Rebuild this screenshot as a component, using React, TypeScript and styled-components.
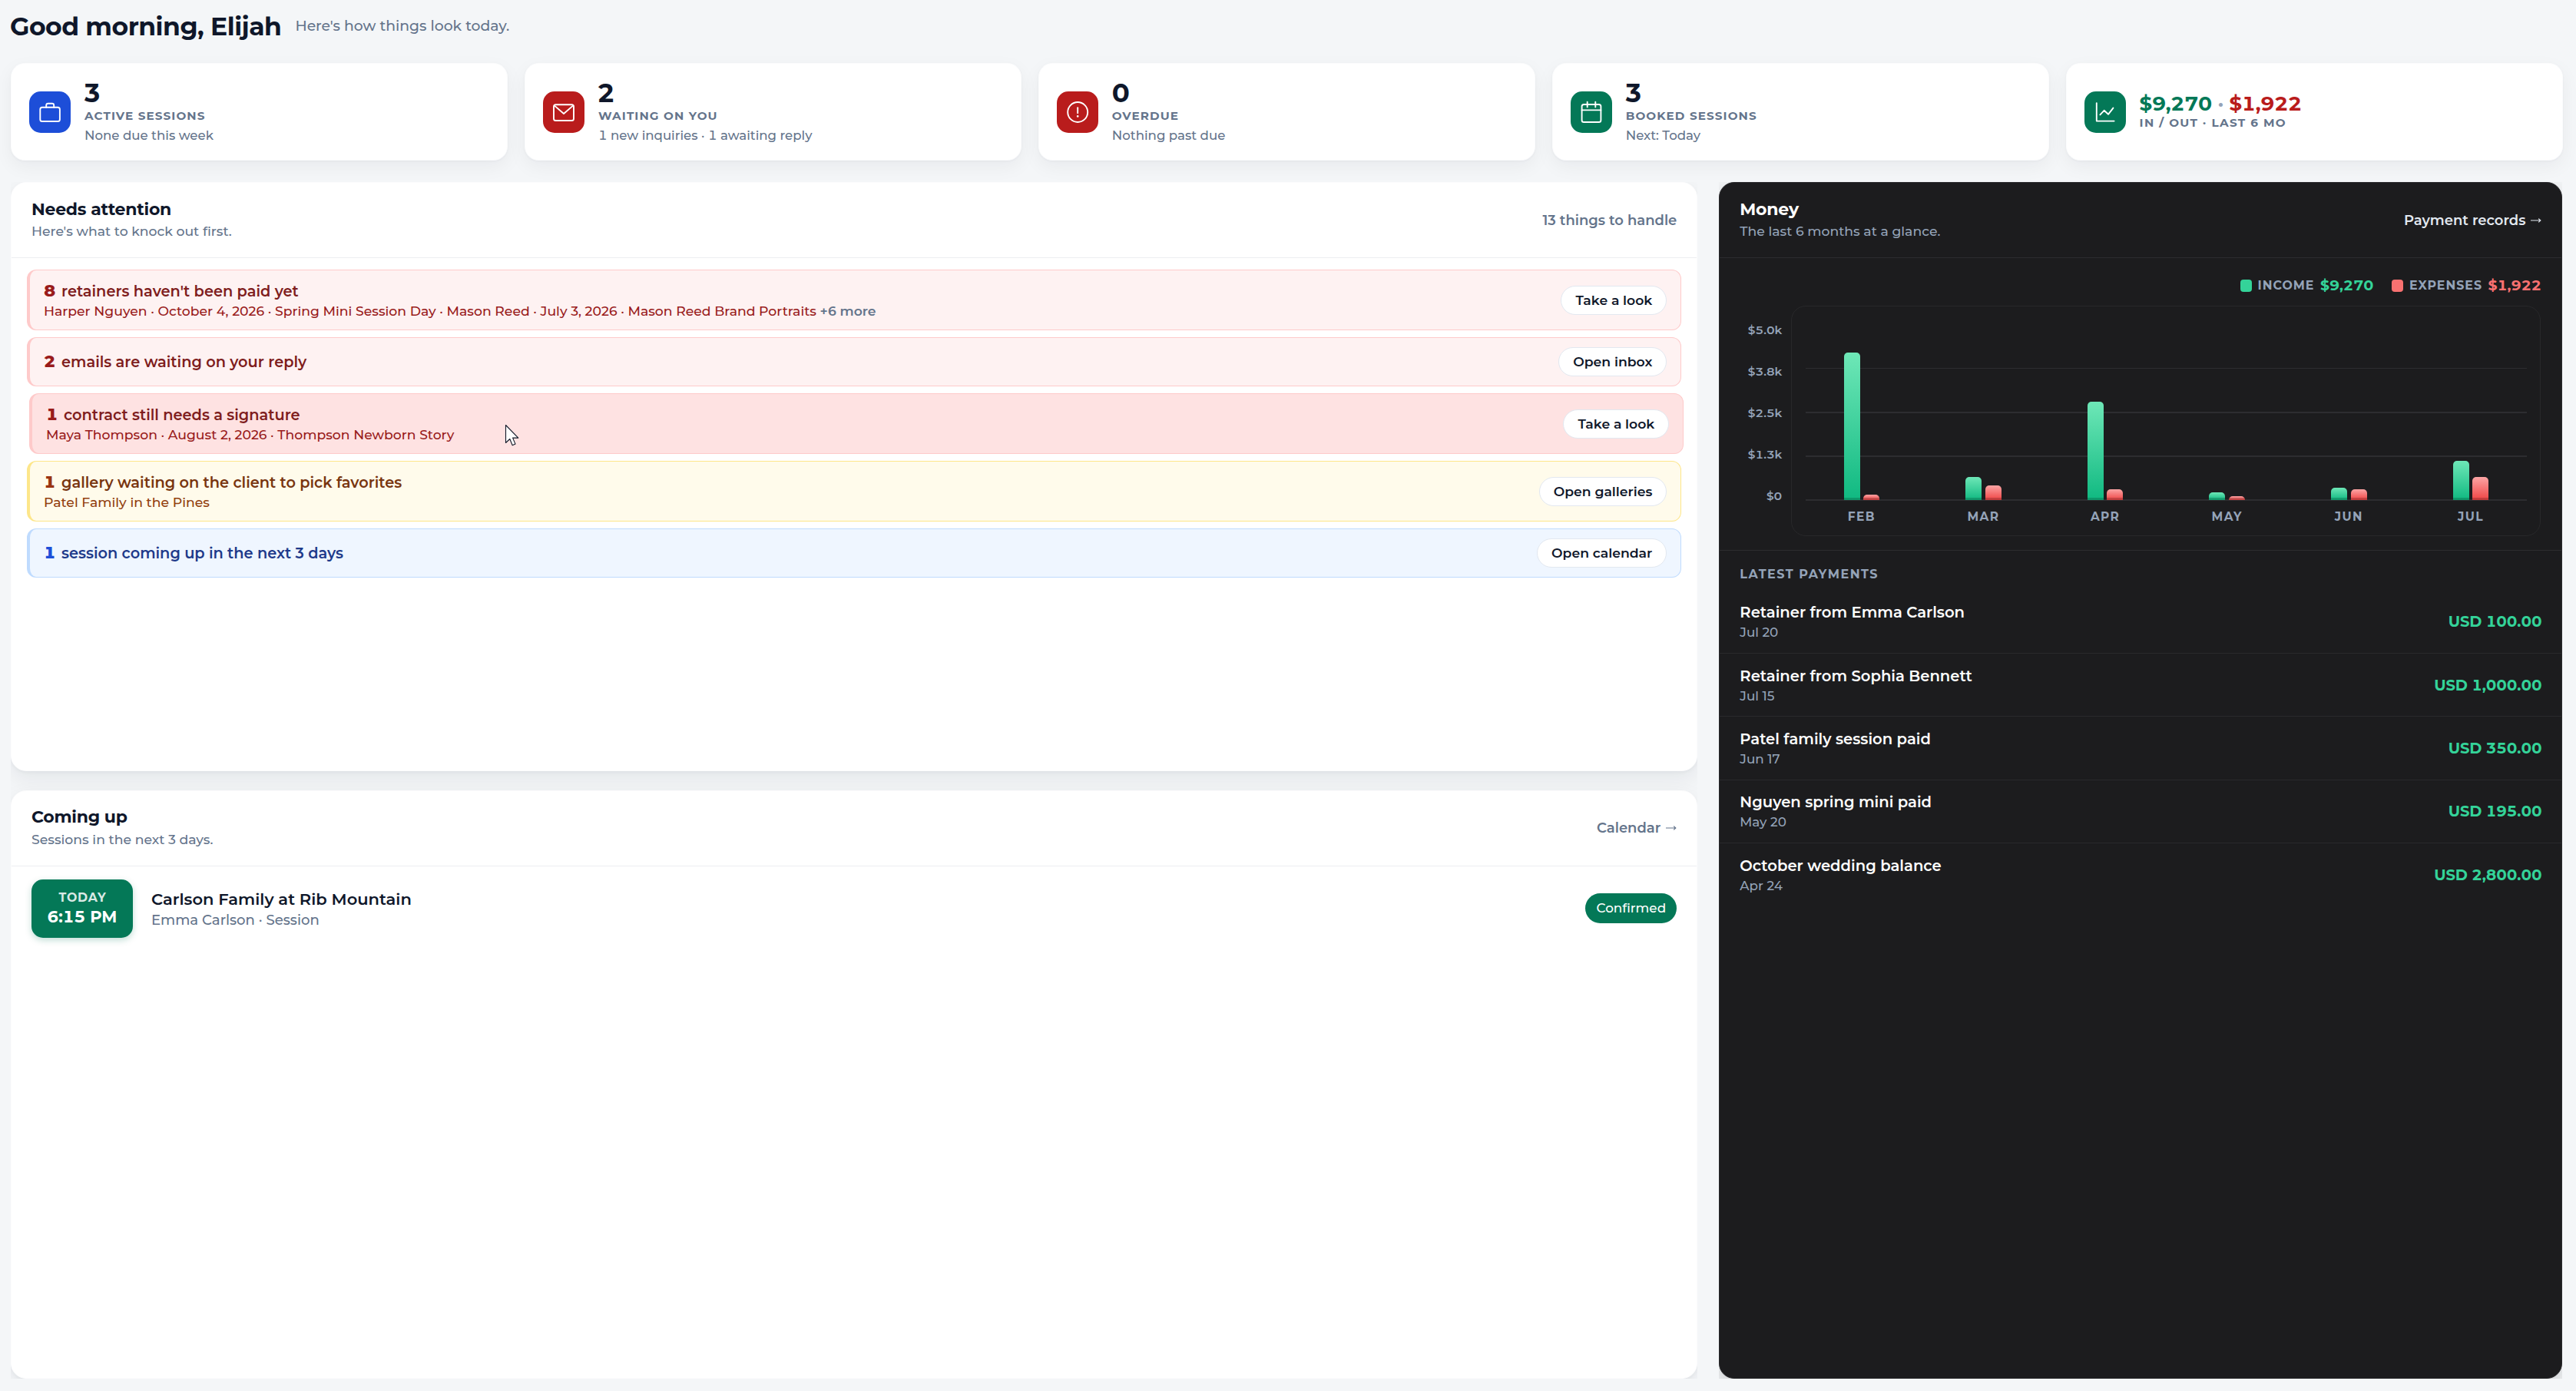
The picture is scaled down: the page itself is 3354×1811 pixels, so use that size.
import React from "react";
import styled, { createGlobalStyle } from "styled-components";

const GlobalStyle = createGlobalStyle`
  *, *::before, *::after { box-sizing: border-box; }
  body {
    margin: 0;
    background: #f4f6f8;
    color: #0f172a;
    font-family: Montserrat, Inter, "Liberation Sans", sans-serif;
  }
  h1, h2, p { margin: 0; }
`;

/* ---------- page ---------- */

const Page = styled.main`
  display: flex;
  flex-direction: column;
  height: 1811px;
  padding: 14px 17.5px 16px 14px;
`;

const Greeting = styled.header`
  display: flex;
  align-items: center;
  gap: 18px;
  height: 40px;
  margin: 0 0 28px -1px;
`;

const GreetingTitle = styled.h1`
  font-size: 33px;
  font-weight: 700;
  line-height: 40px;
  letter-spacing: -0.5px;
`;

const GreetingNote = styled.p`
  font-size: 18.8px;
  font-weight: 500;
  line-height: 24px;
  color: #64748b;
`;

/* ---------- stats ---------- */

const Stats = styled.section`
  display: grid;
  grid-template-columns: repeat(5, 1fr);
  gap: 22px;
  margin-bottom: 28px;
`;

const StatCard = styled.article`
  display: flex;
  align-items: center;
  gap: 18px;
  height: 127px;
  padding: 0 23px;
  background: #fff;
  border: 1px solid #fbfcfd;
  border-radius: 18px;
  box-shadow: 0 8px 24px rgba(15, 23, 42, 0.05), 0 1px 3px rgba(15, 23, 42, 0.04);
`;

const StatIcon = styled.div<{ $color: string }>`
  flex: none;
  width: 54px;
  height: 54px;
  border-radius: 15px;
  background: ${(p) => p.$color};

  svg {
    display: block;
    fill: none;
    stroke: #fff;
    stroke-width: 1.9;
    stroke-linecap: round;
    stroke-linejoin: round;
  }
`;

const StatNumber = styled.div`
  font-size: 34px;
  font-weight: 700;
  line-height: 33px;
  margin-bottom: 3px;
`;

const StatMoney = styled.div`
  display: flex;
  gap: 7.5px;
  font-size: 26px;
  font-weight: 700;
  line-height: 29px;
  letter-spacing: -0.3px;
  font-variant-numeric: tabular-nums;
`;

const Tint = styled.span<{ $color: string }>`
  color: ${(p) => p.$color};
`;

const StatLabel = styled.div<{ $wide?: boolean }>`
  font-size: 15.2px;
  font-weight: 700;
  line-height: 20px;
  letter-spacing: ${(p) => (p.$wide ? 1.35 : 1.1)}px;
  color: #64748b;
`;

const StatNote = styled.div`
  margin-top: 4px;
  font-size: 16.6px;
  font-weight: 500;
  line-height: 22px;
  font-variant-numeric: tabular-nums;
  color: #64748b;
`;

/* ---------- panels ---------- */

const Columns = styled.div`
  flex: 1;
  min-height: 0;
  display: grid;
  grid-template-columns: 2fr 1fr;
  gap: 28px;
`;

const Column = styled.div`
  display: grid;
  grid-auto-rows: 1fr;
  gap: 25px;
  min-width: 0;
  overflow: hidden;
`;

const Panel = styled.section<{ $dark?: boolean }>`
  display: flex;
  flex-direction: column;
  min-height: 0;
  border-radius: 20px;
  border: 1px solid ${(p) => (p.$dark ? "#29292c" : "#fcfcfd")};
  background: ${(p) => (p.$dark ? "#1c1c1e" : "#fff")};
  box-shadow: ${(p) =>
    p.$dark
      ? "0 10px 30px rgba(0, 0, 0, 0.18)"
      : "0 10px 28px rgba(15, 23, 42, 0.07), 0 2px 4px rgba(15, 23, 42, 0.04)"};
`;

const PanelHeader = styled.header<{ $dark?: boolean }>`
  display: flex;
  align-items: center;
  justify-content: space-between;
  height: 98px;
  padding: 0 26px 2px;
  border-bottom: 1px solid ${(p) => (p.$dark ? "#2c2c2f" : "#eceef1")};
`;

const PanelTitle = styled.h2<{ $dark?: boolean }>`
  font-size: 22px;
  font-weight: 700;
  line-height: 28px;
  letter-spacing: -0.24px;
  margin-bottom: 3.5px;
  color: ${(p) => (p.$dark ? "#fff" : "#0f172a")};
`;

const PanelNote = styled.p<{ $dark?: boolean }>`
  font-size: 17.25px;
  font-weight: 500;
  line-height: 22px;
  color: ${(p) => (p.$dark ? "#94a3b8" : "#64748b")};
`;

const PanelLink = styled.span<{ $dark?: boolean }>`
  display: flex;
  align-items: center;
  gap: 7px;
  padding-top: 2px;
  font-size: 18px;
  font-weight: 600;
  line-height: 24px;
  color: ${(p) => (p.$dark ? "#e2e8f0" : "#64748b")};
`;

/* ---------- needs attention ---------- */

const TaskList = styled.div`
  display: flex;
  flex-direction: column;
  gap: 9px;
  padding: 15px 20px;
`;

type Tone = "red" | "amber" | "blue";

const tones = {
  red: { bg: "#fef2f2", hover: "#fee2e2", border: "#fecaca", count: "#991b1b", title: "#7f1d1d", note: "#991b1b" },
  amber: { bg: "#fffbeb", hover: "#fef3c7", border: "#fde68a", count: "#9a3412", title: "#78350f", note: "#92400e" },
  blue: { bg: "#eff6ff", hover: "#dbeafe", border: "#bfdbfe", count: "#1d4ed8", title: "#1e3a8a", note: "#1e40af" },
};

const TaskRow = styled.div<{ $tone: Tone; $tall: boolean; $hovered?: boolean }>`
  display: flex;
  align-items: center;
  justify-content: space-between;
  height: ${(p) => (p.$tall ? 79 : 64)}px;
  padding: 0 18px;
  border: 1px solid ${(p) => tones[p.$tone].border};
  border-left-width: 4px;
  border-radius: 12px;
  background: ${(p) => (p.$hovered ? tones[p.$tone].hover : tones[p.$tone].bg)};
  transform: ${(p) => (p.$hovered ? "translateX(3px)" : "none")};
`;

const TaskTitle = styled.div<{ $tone: Tone }>`
  display: flex;
  gap: 8px;
  font-size: 19.35px;
  font-weight: 600;
  line-height: 26px;
  color: ${(p) => tones[p.$tone].title};
`;

const TaskCount = styled.span<{ $tone: Tone }>`
  width: 15px;
  text-align: center;
  font-size: 22px;
  font-weight: 800;
  font-variant-numeric: tabular-nums;
  color: ${(p) => tones[p.$tone].count};
`;

const TaskNote = styled.div<{ $tone: Tone }>`
  margin-top: 2px;
  font-size: 17.26px;
  font-weight: 500;
  line-height: 22px;
  color: ${(p) => tones[p.$tone].note};
`;

const TaskMore = styled.span`
  font-weight: 600;
  color: #64748b;
`;

const TaskButton = styled.button`
  height: 38px;
  padding: 0 18px;
  border: 1px solid #e2e8f0;
  border-radius: 19px;
  background: #fff;
  color: #0f172a;
  font: 600 17.25px/24px Montserrat, Inter, "Liberation Sans", sans-serif;
`;

/* ---------- coming up ---------- */

const SessionRow = styled.div`
  display: flex;
  align-items: center;
  padding: 17px 26px;
`;

const TimeBadge = styled.div`
  display: flex;
  flex-direction: column;
  align-items: center;
  justify-content: center;
  gap: 2px;
  width: 132px;
  height: 76px;
  margin-right: 24px;
  border-radius: 15px;
  background: #047857;
  color: #fff;
  box-shadow: 0 3px 8px rgba(4, 120, 87, 0.25);
`;

const BadgeDay = styled.span`
  font-size: 15.8px;
  font-weight: 700;
  line-height: 20px;
  letter-spacing: 0.85px;
  margin-right: -1px;
  opacity: 0.85;
`;

const BadgeTime = styled.span`
  font-size: 21px;
  font-weight: 700;
  line-height: 26px;
  font-variant-numeric: tabular-nums;
`;

const SessionTitle = styled.div`
  margin-bottom: 3px;
  padding-top: 1px;
  font-size: 21.05px;
  font-weight: 600;
  line-height: 26px;
`;

const SessionNote = styled.div`
  font-size: 18.1px;
  font-weight: 500;
  line-height: 22px;
  color: #64748b;
`;

const StatusPill = styled.span`
  margin-left: auto;
  width: 119px;
  height: 39px;
  border-radius: 20px;
  background: #047857;
  color: #fff;
  text-align: center;
  font-size: 16.8px;
  font-weight: 500;
  line-height: 39px;
`;

/* ---------- money ---------- */

const ChartSection = styled.div`
  padding: 26px 27px 18px 26px;
  border-bottom: 1px solid #2c2c2f;
`;

const Legend = styled.div`
  display: flex;
  justify-content: flex-end;
  gap: 24px;
  margin-bottom: 16px;
`;

const LegendItem = styled.div`
  display: flex;
  align-items: center;
  height: 20px;
`;

const Swatch = styled.span<{ $color: string }>`
  width: 15px;
  height: 16px;
  margin-right: 8px;
  border-radius: 4px;
  background: ${(p) => p.$color};
`;

const LegendLabel = styled.span`
  margin-right: 7.5px;
  font-size: 15.8px;
  font-weight: 700;
  line-height: 20px;
  letter-spacing: 1px;
  color: #94a3b8;
`;

const LegendValue = styled.span<{ $color: string }>`
  margin-right: -0.5px;
  font-size: 18.8px;
  font-weight: 700;
  line-height: 20px;
  font-variant-numeric: tabular-nums;
  color: ${(p) => p.$color};
`;

const ChartRow = styled.div`
  display: grid;
  grid-template-columns: 55px 1fr;
  gap: 12px;
  height: 300px;
`;

const YAxis = styled.div`
  display: flex;
  flex-direction: column;
  align-items: flex-end;
  justify-content: space-between;
  padding: 22px 0 42px;
  font-size: 15.3px;
  font-weight: 600;
  line-height: 20px;
  font-variant-numeric: tabular-nums;
  color: #94a3b8;
`;

const ChartBox = styled.div`
  padding: 24px 17.5px 0;
  border: 1px solid #28282a;
  border-radius: 19px;
`;

const Plot = styled.div`
  display: grid;
  height: 229px;
`;

const GridLines = styled.div`
  grid-area: 1 / 1;
  display: grid;
  grid-template-rows: 57px 58px 57px 57px;
`;

const GridLine = styled.div<{ $thick: boolean }>`
  border-bottom: ${(p) => (p.$thick ? 2 : 1)}px solid #2d2d30;
`;

const Bars = styled.div`
  grid-area: 1 / 1;
  display: grid;
  grid-template-columns: repeat(6, 1fr);
  gap: 12.6px;
  padding-bottom: 1px;
`;

const BarPair = styled.div`
  display: flex;
  align-items: flex-end;
  justify-content: center;
  gap: 4.5px;
`;

const Bar = styled.div<{ $size: number; $kind: "income" | "expense" }>`
  width: 21px;
  height: ${(p) => p.$size}px;
  border-radius: 5px 5px 0 0;
  background: ${(p) =>
    p.$kind === "income" ? "linear-gradient(#6ee7b7, #10b981)" : "linear-gradient(#fca5a5, #ef4444)"};
  box-shadow: inset 0 -3px 0 rgba(0, 0, 0, 0.18);
`;

const Months = styled.div`
  display: grid;
  grid-template-columns: repeat(6, 1fr);
  gap: 12.6px;
  margin-top: 11px;
  text-align: center;
  font-size: 15.4px;
  font-weight: 700;
  line-height: 20px;
  letter-spacing: 1.4px;
  color: #94a3b8;
`;

const PaymentsLabel = styled.div`
  margin: 21px 26px 10.7px;
  font-size: 16px;
  font-weight: 700;
  line-height: 20px;
  letter-spacing: 1.48px;
  color: #94a3b8;
`;

const PaymentRow = styled.div`
  display: flex;
  align-items: center;
  justify-content: space-between;
  height: 82.33px;
  padding: 0 26px;
  border-bottom: 1px solid #29292c;

  &:last-child {
    border-bottom-color: transparent;
  }
`;

const PaymentTitle = styled.div`
  margin-bottom: 2px;
  font-size: 19.6px;
  font-weight: 600;
  line-height: 26px;
  color: #fff;
`;

const PaymentDate = styled.div`
  font-size: 16.8px;
  font-weight: 500;
  line-height: 22px;
  color: #94a3b8;
`;

const PaymentAmount = styled.div`
  font-size: 19.5px;
  font-weight: 700;
  line-height: 26px;
  letter-spacing: -0.1px;
  font-variant-numeric: tabular-nums;
  color: #34d399;
`;

const Pointer = styled.svg`
  position: absolute;
  left: 657px;
  top: 552px;
`;

/* ---------- icons ---------- */

const icons = {
  briefcase: (
    <>
      <rect x="14.3" y="20.8" width="25.6" height="18.2" rx="2.6" />
      <path d="M22.2 20.8v-2.6a2.4 2.4 0 0 1 2.4-2.4h5.2a2.4 2.4 0 0 1 2.4 2.4v2.6" />
    </>
  ),
  mail: (
    <>
      <rect x="14" y="17.2" width="26" height="20.8" rx="2.6" />
      <path d="M15 18.6 27 29l12-10.4" />
    </>
  ),
  alert: (
    <>
      <circle cx="27.2" cy="27" r="13" />
      <path d="M27.2 21.2v7" />
      <path d="M27.2 32.2v.3" strokeWidth={2.6} />
    </>
  ),
  calendar: (
    <>
      <rect x="14.6" y="17" width="24.8" height="23" rx="2.6" />
      <path d="M14.6 24.4h24.8M21.7 13.8v6.6M32.3 13.8v6.6" />
    </>
  ),
  chart: (
    <>
      <path d="M15.8 15.2v23.4h22.8" />
      <path d="m20.4 30.4 5.2-5.6 5.4 5 6.4-8.2" />
    </>
  ),
};

const Icon = ({ name, color }: { name: keyof typeof icons; color: string }) => (
  <StatIcon $color={color}>
    <svg width="54" height="54" viewBox="0 0 54 54">
      {icons[name]}
    </svg>
  </StatIcon>
);

const Arrow = () => (
  <svg width="14" height="8" viewBox="0 0 14 8" fill="none" stroke="currentColor" strokeWidth="1.2">
    <path d="M0 4h12.6M10.2 1.6 12.8 4l-2.6 2.4" />
  </svg>
);

/* ---------- data ---------- */

const BLUE = "#1d4ed8";
const RED = "#b91c1c";
const GREEN = "#047857";

const stats = [
  { icon: "briefcase", color: BLUE, value: 3, label: "ACTIVE SESSIONS", note: "None due this week" },
  { icon: "mail", color: RED, value: 2, label: "WAITING ON YOU", note: "1 new inquiries · 1 awaiting reply" },
  { icon: "alert", color: RED, value: 0, label: "OVERDUE", note: "Nothing past due" },
  { icon: "calendar", color: GREEN, value: 3, label: "BOOKED SESSIONS", note: "Next: Today" },
] as const;

const tasks: {
  tone: Tone; count: number; title: string; note?: string; more?: string; action: string; hovered?: boolean;
}[] = [
  {
    tone: "red", count: 8, title: "retainers haven't been paid yet",
    note: "Harper Nguyen · October 4, 2026 · Spring Mini Session Day · Mason Reed · July 3, 2026 · Mason Reed Brand Portraits",
    more: "+6 more", action: "Take a look",
  },
  { tone: "red", count: 2, title: "emails are waiting on your reply", action: "Open inbox" },
  {
    tone: "red", count: 1, title: "contract still needs a signature",
    note: "Maya Thompson · August 2, 2026 · Thompson Newborn Story", action: "Take a look", hovered: true,
  },
  {
    tone: "amber", count: 1, title: "gallery waiting on the client to pick favorites",
    note: "Patel Family in the Pines", action: "Open galleries",
  },
  { tone: "blue", count: 1, title: "session coming up in the next 3 days", action: "Open calendar" },
];

const months = [
  { name: "FEB", income: 192, expense: 7 },
  { name: "MAR", income: 30, expense: 19 },
  { name: "APR", income: 128, expense: 14 },
  { name: "MAY", income: 10, expense: 5 },
  { name: "JUN", income: 16, expense: 14 },
  { name: "JUL", income: 51, expense: 30 },
];

const payments = [
  { title: "Retainer from Emma Carlson", date: "Jul 20", amount: "USD 100.00" },
  { title: "Retainer from Sophia Bennett", date: "Jul 15", amount: "USD 1,000.00" },
  { title: "Patel family session paid", date: "Jun 17", amount: "USD 350.00" },
  { title: "Nguyen spring mini paid", date: "May 20", amount: "USD 195.00" },
  { title: "October wedding balance", date: "Apr 24", amount: "USD 2,800.00" },
];

export default function App() {
  return (
    <>
      <GlobalStyle />
      <Page>
        <Greeting>
          <GreetingTitle>Good morning, Elijah</GreetingTitle>
          <GreetingNote>Here's how things look today.</GreetingNote>
        </Greeting>

        <Stats>
          {stats.map((s) => (
            <StatCard key={s.label}>
              <Icon name={s.icon} color={s.color} />
              <div>
                <StatNumber>{s.value}</StatNumber>
                <StatLabel>{s.label}</StatLabel>
                <StatNote>{s.note}</StatNote>
              </div>
            </StatCard>
          ))}
          <StatCard>
            <Icon name="chart" color={GREEN} />
            <div>
              <StatMoney>
                <Tint $color={GREEN}>$9,270</Tint>
                <Tint $color="#94a3b8">·</Tint>
                <Tint $color={RED}>$1,922</Tint>
              </StatMoney>
              <StatLabel $wide>IN / OUT · LAST 6 MO</StatLabel>
            </div>
          </StatCard>
        </Stats>

        <Columns>
          <Column>
            <Panel>
              <PanelHeader>
                <div>
                  <PanelTitle>Needs attention</PanelTitle>
                  <PanelNote>Here's what to knock out first.</PanelNote>
                </div>
                <PanelLink>13 things to handle</PanelLink>
              </PanelHeader>
              <TaskList>
                {tasks.map((t) => (
                  <TaskRow key={t.title} $tone={t.tone} $tall={!!t.note} $hovered={t.hovered}>
                    <div>
                      <TaskTitle $tone={t.tone}>
                        <TaskCount $tone={t.tone}>{t.count}</TaskCount>
                        {t.title}
                      </TaskTitle>
                      {t.note && (
                        <TaskNote $tone={t.tone}>
                          {t.note} {t.more && <TaskMore>{t.more}</TaskMore>}
                        </TaskNote>
                      )}
                    </div>
                    <TaskButton>{t.action}</TaskButton>
                  </TaskRow>
                ))}
              </TaskList>
            </Panel>

            <Panel>
              <PanelHeader>
                <div>
                  <PanelTitle>Coming up</PanelTitle>
                  <PanelNote>Sessions in the next 3 days.</PanelNote>
                </div>
                <PanelLink>
                  Calendar <Arrow />
                </PanelLink>
              </PanelHeader>
              <SessionRow>
                <TimeBadge>
                  <BadgeDay>TODAY</BadgeDay>
                  <BadgeTime>6:15 PM</BadgeTime>
                </TimeBadge>
                <div>
                  <SessionTitle>Carlson Family at Rib Mountain</SessionTitle>
                  <SessionNote>Emma Carlson · Session</SessionNote>
                </div>
                <StatusPill>Confirmed</StatusPill>
              </SessionRow>
            </Panel>
          </Column>

          <Column>
            <Panel $dark>
              <PanelHeader $dark>
                <div>
                  <PanelTitle $dark>Money</PanelTitle>
                  <PanelNote $dark>The last 6 months at a glance.</PanelNote>
                </div>
                <PanelLink $dark>
                  Payment records <Arrow />
                </PanelLink>
              </PanelHeader>

              <ChartSection>
                <Legend>
                  <LegendItem>
                    <Swatch $color="#34d399" />
                    <LegendLabel>INCOME</LegendLabel>
                    <LegendValue $color="#34d399">$9,270</LegendValue>
                  </LegendItem>
                  <LegendItem>
                    <Swatch $color="#f87171" />
                    <LegendLabel>EXPENSES</LegendLabel>
                    <LegendValue $color="#f87171">$1,922</LegendValue>
                  </LegendItem>
                </Legend>
                <ChartRow>
                  <YAxis>
                    {["$5.0k", "$3.8k", "$2.5k", "$1.3k", "$0"].map((y) => (
                      <span key={y}>{y}</span>
                    ))}
                  </YAxis>
                  <ChartBox>
                    <Plot>
                      <GridLines>
                        {[0, 1, 2, 3].map((i) => (
                          <GridLine key={i} $thick={i > 0} />
                        ))}
                      </GridLines>
                      <Bars>
                        {months.map((m) => (
                          <BarPair key={m.name}>
                            <Bar $kind="income" $size={m.income} />
                            <Bar $kind="expense" $size={m.expense} />
                          </BarPair>
                        ))}
                      </Bars>
                    </Plot>
                    <Months>
                      {months.map((m) => (
                        <span key={m.name}>{m.name}</span>
                      ))}
                    </Months>
                  </ChartBox>
                </ChartRow>
              </ChartSection>

              <PaymentsLabel>LATEST PAYMENTS</PaymentsLabel>
              <div>
                {payments.map((p) => (
                  <PaymentRow key={p.title}>
                    <div>
                      <PaymentTitle>{p.title}</PaymentTitle>
                      <PaymentDate>{p.date}</PaymentDate>
                    </div>
                    <PaymentAmount>{p.amount}</PaymentAmount>
                  </PaymentRow>
                ))}
              </div>
            </Panel>
          </Column>
        </Columns>
      </Page>

      <Pointer width="20" height="30" viewBox="0 0 20 30">
        <path
          d="M1.5 1.5v23l5.3-5 3.4 8.2 3.8-1.6-3.4-8h7.2z"
          fill="#fff"
          stroke="#111827"
          strokeWidth="1.1"
          strokeLinejoin="round"
        />
      </Pointer>
    </>
  );
}
